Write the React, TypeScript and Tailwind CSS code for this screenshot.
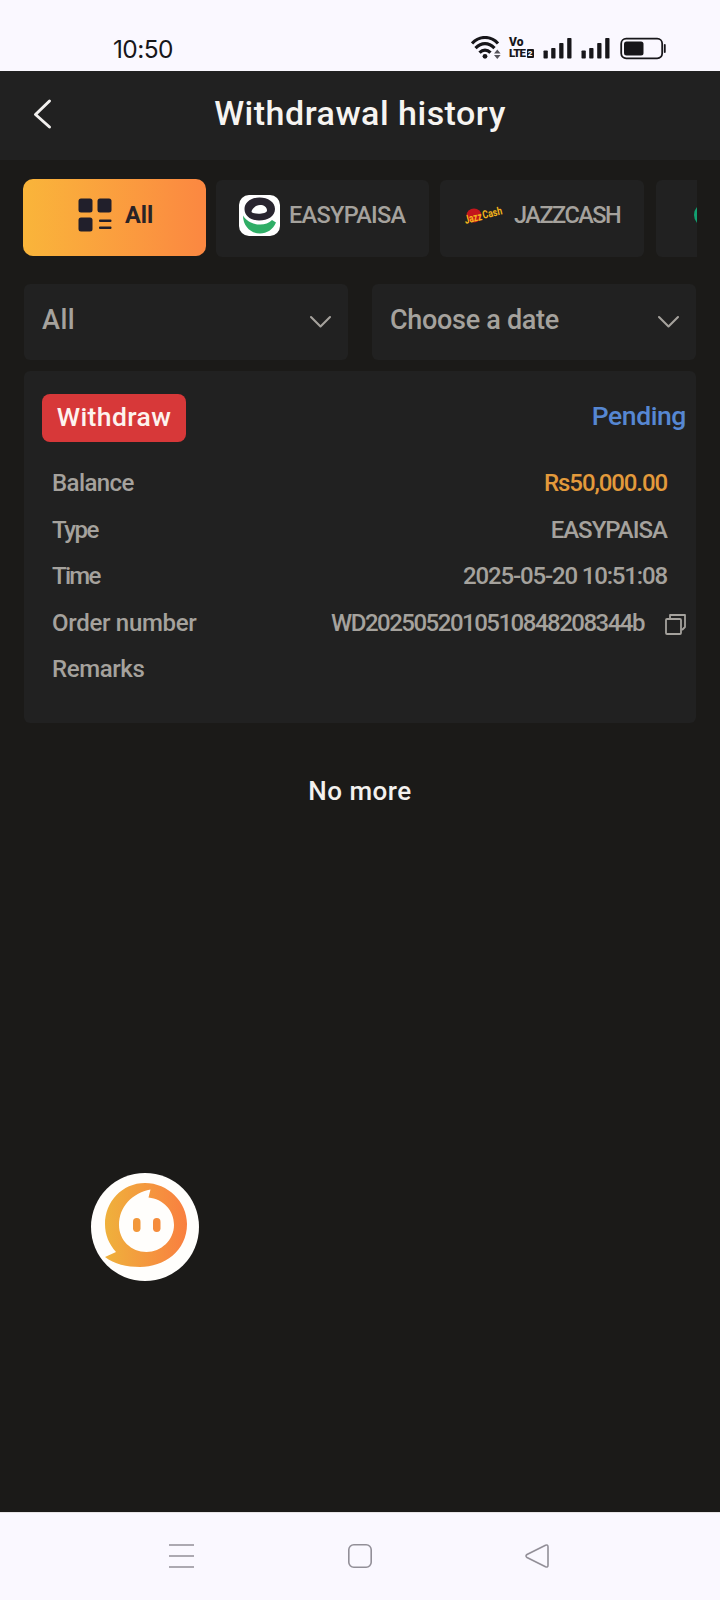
import type { ReactNode } from 'react'
import clsx from 'clsx'

const rows = [
  { label: 'Balance', labelClass: 'tracking-[-0.6px]', value: 'Rs50,000.00', valueClass: 'text-[#e39a3b] tracking-[-1.1px]' },
  { label: 'Type', labelClass: 'tracking-[-1.5px]', value: 'EASYPAISA', valueClass: 'tracking-[-1.0px]' },
  { label: 'Time', labelClass: 'tracking-[-1.7px]', value: '2025-05-20 10:51:08', valueClass: 'tracking-[-1.15px]' },
]

function SignalBars() {
  return (
    <svg width="29" height="21" viewBox="0 0 29 21" fill="#17161a">
      <rect x="0.5" y="12.5" width="4.3" height="8" rx="0.8" />
      <rect x="8.2" y="10" width="4.3" height="10.5" rx="0.8" />
      <rect x="16.2" y="5" width="4.3" height="15.5" rx="0.8" />
      <rect x="24.2" y="0" width="4.3" height="20.5" rx="0.8" />
    </svg>
  )
}

function StatusBar() {
  return (
    <div className="h-[71px] bg-[#faf8ff] flex items-start justify-between pl-[113px] pr-[54px] text-[#17161a]">
      <div className="mt-[34px] text-[24.5px] leading-[30px] tracking-[-0.6px] font-['Inter',sans-serif]">10:50</div>
      <div className="mt-[36px] flex items-start">
        <svg width="31" height="24" viewBox="0 0 31 24" fill="none" stroke="#17161a" strokeWidth="3.2">
          <path d="M1 7.5C8.5-0.5 19.5-0.5 27 7.5" />
          <path d="M4.5 12.2C10.5 6.2 17.5 6.2 23.5 12.2" />
          <path d="M8.5 16.7C12 13.2 16 13.2 19.5 16.7" />
          <circle cx="14" cy="20.3" r="2.4" fill="#17161a" stroke="none" />
          <path d="M23 17.5l3.3-4 3.3 4zM23 19l3.3 4 3.3-4z" fill="#55535a" stroke="none" />
        </svg>
        <div className="ml-[7px] mt-px w-[25px] font-['Roboto',sans-serif] font-black">
          <div className="text-[12px] leading-[11px]">Vo</div>
          <div className="flex items-center text-[11.5px] leading-[11px] tracking-[-0.9px]">
            LTE
            <span className="ml-[1.5px] flex h-[9px] w-[7px] items-center justify-center rounded-[1px] bg-[#17161a] text-[8px] leading-[9px] tracking-normal text-white">2</span>
          </div>
        </div>
        <div className="ml-[9px] mt-[2px]"><SignalBars /></div>
        <div className="ml-[9px] mt-[2px]"><SignalBars /></div>
        <svg className="ml-[10px] mt-px" width="46" height="23" viewBox="0 0 46 23" fill="none">
          <rect x="1.2" y="1.7" width="41" height="19.6" rx="5" stroke="#17161a" strokeWidth="1.8" />
          <rect x="4" y="4.5" width="19.5" height="14" rx="2.5" fill="#17161a" />
          <path d="M44.8 8v7" stroke="#17161a" strokeWidth="1.8" strokeLinecap="round" />
        </svg>
      </div>
    </div>
  )
}

function Header() {
  return (
    <div className="h-[89px] bg-[#212121] grid grid-cols-[80px_1fr_80px] items-start">
      <svg className="ml-[32px] mt-[27px]" width="20" height="32" viewBox="0 0 20 32" fill="none" stroke="#f2f0ee" strokeWidth="3" strokeLinecap="round" strokeLinejoin="round">
        <path d="M17.5 3L3.5 16.5l14 12.5" />
      </svg>
      <h1 className="mt-[22px] text-center text-[34px] leading-[40px] font-medium tracking-[0.5px] text-[#f6f4f1]">Withdrawal history</h1>
    </div>
  )
}

function GridIcon() {
  return (
    <svg width="34" height="34" viewBox="0 0 34 34" fill="#211f2b">
      <rect x="0.5" y="0.5" width="14" height="14" rx="2.5" />
      <rect x="19.5" y="0.5" width="14" height="14" rx="2.5" />
      <rect x="0.5" y="19.5" width="14" height="14" rx="2.5" />
      <rect x="21" y="21.5" width="12.5" height="2.4" rx="1" />
      <rect x="21" y="28.5" width="12.5" height="2.4" rx="1" />
    </svg>
  )
}

function EasypaisaLogo() {
  return (
    <svg width="41" height="41" viewBox="0 0 41 41">
      <rect width="41" height="41" rx="10" fill="#fff" />
      <path d="M4 20.5C10 30.5 26 32.5 33 25L37 27.5C34 34.5 28 38.5 21 38.5C12 38.5 4 31.5 4 20.5Z" fill="#2fae66" />
      <path d="M20.5 2.5C29 2.5 36 7 36 14C36 21 29 25.5 20 25.5C12 25.5 5.5 21 5.5 14C5.5 7.5 12 2.5 20.5 2.5ZM21 10C16 10 12.5 15 12.5 17C14 19.5 28 19.5 28 15.5C28 12 25 10 21 10Z" fill="#29252f" fillRule="evenodd" />
    </svg>
  )
}

function JazzCashLogo() {
  return (
    <svg className="overflow-visible" width="40" height="24" viewBox="0 0 40 24">
      <ellipse cx="10" cy="12.5" rx="7.5" ry="7" fill="#c3161c" />
      <g transform="rotate(-13 20 12)" fill="#f5b51b" fontFamily="Roboto, sans-serif" fontWeight="700">
        <text x="0" y="16.5" fontSize="12" textLength="17.5" lengthAdjust="spacingAndGlyphs">Jazz</text>
        <text x="18.5" y="15.5" fontSize="11" textLength="20" lengthAdjust="spacingAndGlyphs">Cash</text>
      </g>
    </svg>
  )
}

function Tab({ className, children }: { className: string; children: ReactNode }) {
  return (
    <div className={clsx('flex h-[77px] shrink-0 items-center text-[23.5px] leading-[28px]', className)}>
      {children}
    </div>
  )
}

function MethodTabs() {
  return (
    <div className="mx-[23px] mt-[18px] flex h-[79px] overflow-hidden font-medium text-[#a5a29d]">
      <Tab className="mt-px w-[183px] rounded-[10px] bg-linear-to-r from-[#f9b53a] to-[#fb8741] pl-[55px] pb-[5px] font-bold text-[#2a2326]">
        <GridIcon />
        <span className="ml-[13px] tracking-normal">All</span>
      </Tab>
      <Tab className="ml-[10px] mt-[2px] w-[213px] rounded-[6px] bg-[#212121] pl-[23px] pb-[7px]">
        <EasypaisaLogo />
        <span className="ml-[9px] tracking-[-0.7px]">EASYPAISA</span>
      </Tab>
      <Tab className="ml-[11px] mt-[2px] w-[204px] rounded-[6px] bg-[#212121] pl-[24px] pb-[7px]">
        <JazzCashLogo />
        <span className="ml-[10px] tracking-[-1.5px]">JAZZCASH</span>
      </Tab>
      <Tab className="ml-[12px] mt-[2px] w-[200px] rounded-[6px] bg-[#212121] pl-[38px] pb-[7px]">
        <span className="h-[24px] w-[40px] rounded-full bg-[#12a071]" />
      </Tab>
    </div>
  )
}

function Select({ label, className }: { label: string; className: string }) {
  return (
    <div className="flex h-[76px] flex-1 items-start justify-between rounded-[6px] bg-[#212121] pl-[18px] pr-[16px] text-[#a5a29d]">
      <span className={clsx('mt-[20px] text-[27px] leading-[32px] font-medium', className)}>{label}</span>
      <svg className="mt-[30px]" width="23" height="16" viewBox="0 0 23 16" fill="none" stroke="currentColor" strokeWidth="2.1" strokeLinecap="round" strokeLinejoin="round">
        <path d="M2 3l9.5 9.5L21 3" />
      </svg>
    </div>
  )
}

function HistoryCard() {
  return (
    <div className="mx-6 mt-[11px] h-[352px] rounded-[6px] bg-[#212121] pl-[18px] pr-[10px] pt-[23px]">
      <div className="flex h-[48px] items-start justify-between">
        <div className="flex h-[48px] w-[144px] justify-center rounded-[8px] bg-[#d73839] pt-[7px] text-[26.5px] leading-[32px] font-medium text-[#fdf3ee]">
          <span className="tracking-[0.4px]">Withdraw</span>
        </div>
        <span className="mt-[6px] text-[26.5px] leading-[32px] font-medium tracking-[-0.4px] text-[#5687d2]">Pending</span>
      </div>
      <div className="mt-[18px] pl-[10px] text-[24px] leading-[46.6px] font-medium text-[#a5a29d]">
        {rows.map(row => (
          <div key={row.label} className="flex justify-between pr-[19px]">
            <span className={row.labelClass}>{row.label}</span>
            <span className={row.valueClass}>{row.value}</span>
          </div>
        ))}
        <div className="flex items-center">
          <span className="tracking-[-0.3px]">Order number</span>
          <span className="ml-auto tracking-[-1.5px]">WD2025052010510848208344b</span>
          <svg className="ml-[21px] mt-[3px]" width="21" height="21" viewBox="0 0 21 21" fill="none" stroke="currentColor" strokeWidth="1.8">
            <rect x="1" y="5" width="15" height="15" rx="1" />
            <path d="M5 5V1h15v12l-3 3" strokeLinejoin="round" />
          </svg>
        </div>
        <div className="tracking-[-0.4px]">Remarks</div>
      </div>
    </div>
  )
}

function SupportButton() {
  return (
    <button className="absolute left-[91px] top-[1173px] size-[108px] rounded-full bg-[#fffefc]">
      <svg width="108" height="108" viewBox="0 0 108 108">
        <defs>
          <linearGradient id="bubble" x1="0" y1="0" x2="1" y2="0">
            <stop offset="0" stopColor="#efb13c" />
            <stop offset="1" stopColor="#f97f40" />
          </linearGradient>
        </defs>
        <path d="M54 10C77 10 96 29 96 51C96 78 73 94 49 94C36 94 23 91 14 84L25 79C18 71 14 62 14 51C14 29 31 10 54 10Z" fill="url(#bubble)" />
        <path d="M59.5 16.5L57.5 24.5C72 26 83 37 83 52C83 67 70 79 55.5 79C40 79 28 67 28 52C28 34 41 20 59.5 16.5Z" fill="#fffefc" />
        <rect x="42" y="45" width="7.5" height="14" rx="3.7" fill="#f2973a" />
        <rect x="62" y="45" width="7.5" height="14" rx="3.7" fill="#f58c3c" />
      </svg>
    </button>
  )
}

function NavBar() {
  return (
    <div className="mt-auto flex h-[88px] items-start border-t border-[#e6e4e6] bg-[#faf8ff]">
      <svg className="ml-[169px] mt-[30px]" width="25" height="26" viewBox="0 0 25 26" stroke="#928f98" strokeWidth="1.7">
        <path d="M0 2h25M0 13h25M0 24h25" />
      </svg>
      <svg className="ml-[154px] mt-[30px]" width="24" height="26" viewBox="0 0 24 26" fill="none" stroke="#928f98" strokeWidth="1.6">
        <rect x="0.8" y="1.8" width="22.4" height="22.4" rx="5" />
      </svg>
      <svg className="ml-[153px] mt-[30px]" width="25" height="26" viewBox="0 0 25 26" fill="none" stroke="#928f98" strokeWidth="1.6" strokeLinejoin="round">
        <path d="M2 11.5L20.5 2.2Q23 1.3 23 3.8V22.2Q23 24.7 20.5 23.8L2 14.5Q0 13 2 11.5Z" />
      </svg>
    </div>
  )
}

export default function App() {
  return (
    <div className="relative flex h-[1600px] w-[720px] flex-col overflow-hidden bg-[#1b1a18] font-['Roboto',sans-serif]">
      <StatusBar />
      <Header />
      <MethodTabs />
      <div className="mx-6 mt-[27px] flex gap-6">
        <Select label="All" className="tracking-[0.5px]" />
        <Select label="Choose a date" className="tracking-[-0.3px]" />
      </div>
      <HistoryCard />
      <div className="mt-[52px] text-center text-[26px] leading-[32px] font-medium tracking-[0.5px] text-[#f3f1ee]">No more</div>
      <SupportButton />
      <NavBar />
    </div>
  )
}
